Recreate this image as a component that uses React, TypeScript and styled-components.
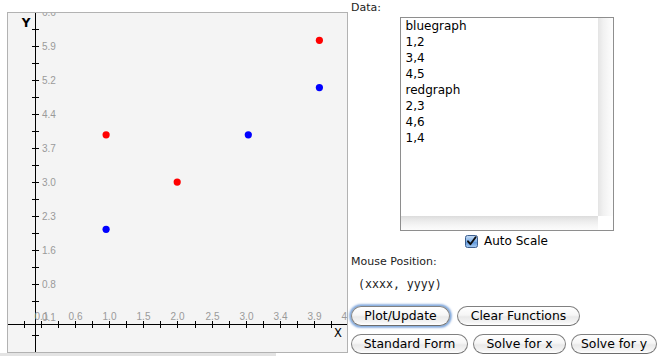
import React from "react";
import styled, { createGlobalStyle } from "styled-components";

const GlobalStyle = createGlobalStyle`
  html, body { margin: 0; padding: 0; background: #ffffff; }
  body { overflow: hidden; font-family: "DejaVu Sans", Verdana, sans-serif; }
`;

const Page = styled.div`
  display: flex;
  width: 665px;
  height: 356px;
  overflow: hidden;
  background: #ffffff;
`;

const LeftColumn = styled.div`
  width: 348px;
  display: flex;
  flex-direction: column;
  flex: none;
`;

const PlotPanel = styled.div`
  margin: 12px 0 0 7px;
  width: 341px;
  height: 341px;
  box-sizing: border-box;
  border: 1px solid #b2b2b2;
  background: #f4f4f4;
  overflow: hidden;
  flex: none;
`;

const BottomStrip = styled.div`
  width: 276px;
  height: 4px;
  background: #e3e3e3;
  flex: none;
`;

const RightColumn = styled.div`
  width: 317px;
  display: flex;
  flex-direction: column;
  flex: none;
`;

const FieldLabel = styled.div<{ $top?: number }>`
  margin-top: ${(p) => p.$top ?? 0}px;
  padding-left: 3px;
  height: 15px;
  line-height: 15px;
  font-size: 11px;
  color: #1c1c1c;
  font-family: "DejaVu Sans", sans-serif;
`;

const DataBox = styled.div`
  margin-top: 2px;
  align-self: center;
  width: 214px;
  height: 214px;
  box-sizing: border-box;
  border: 1px solid #8e8e8e;
  background: #ffffff;
  display: grid;
  grid-template-columns: 1fr 15px;
  grid-template-rows: 1fr 14px;
`;

const DataText = styled.div`
  padding-left: 5px;
  font-size: 12px;
  line-height: 16px;
  color: #000000;
  font-family: "DejaVu Sans", sans-serif;
  white-space: pre;
`;

const VTrack = styled.div`
  background: linear-gradient(to right, #e4e4e4 0%, #f1f1f1 35%, #f8f8f8 70%, #fdfdfd 100%);
`;

const HTrack = styled.div`
  background: linear-gradient(to bottom, #dcdcdc 0%, #ececec 35%, #f6f6f6 70%, #fcfcfc 100%);
`;

const Corner = styled.div`
  background: #ffffff;
`;

const CheckRow = styled.label`
  align-self: center;
  height: 19px;
  display: flex;
  align-items: center;
  gap: 6px;
  font-size: 12px;
  color: #000000;
  font-family: "DejaVu Sans", sans-serif;
`;

const CheckSvg = styled.svg`
  width: 13px;
  height: 13px;
  flex: none;
  margin-top: 1px;
`;

const MouseValue = styled.div`
  margin-top: 8px;
  padding-left: 3px;
  height: 15px;
  line-height: 15px;
  font-size: 11.6px;
  color: #1c1c1c;
  font-family: "DejaVu Sans Mono", "Liberation Mono", monospace;
  white-space: pre;
`;

const ButtonRow = styled.div<{ $top: number; $gap: number }>`
  margin-top: ${(p) => p.$top}px;
  padding-left: 3px;
  display: flex;
  gap: ${(p) => p.$gap}px;
`;

const AquaButton = styled.button<{ $w: number; $focused?: boolean }>`
  width: ${(p) => p.$w}px;
  height: 20px;
  box-sizing: border-box;
  padding: 0;
  border: 1px solid #808080;
  border-bottom-color: #6c6c6c;
  border-radius: 10px;
  background: linear-gradient(to bottom, #ffffff 0%, #f6f6f6 45%, #e9e9e9 55%, #f4f4f4 85%, #ffffff 100%);
  font-family: "DejaVu Sans", sans-serif;
  font-size: 12.4px;
  line-height: 18px;
  color: #000000;
  text-align: center;
  white-space: nowrap;
  box-shadow: ${(p) =>
    p.$focused
      ? "0 0 0 1px #8fb3e0, 0 0 2px 2px rgba(92, 142, 210, 0.65)"
      : "none"};
`;

const points = [
  { x: 1, y: 2, c: "#0000ff" },
  { x: 3, y: 4, c: "#0000ff" },
  { x: 4, y: 5, c: "#0000ff" },
  { x: 2, y: 3, c: "#ff0000" },
  { x: 4, y: 6, c: "#ff0000" },
  { x: 1, y: 4, c: "#ff0000" },
];

const OX = 8;
const OY = 13;

const yTicks = Array.from({ length: 18 }, (_, k) => 12 + 17 * k).concat([335]);
const yLabels: [number, string][] = [
  [12, "6.6"],
  [46, "5.9"],
  [80, "5.2"],
  [114, "4.4"],
  [148, "3.7"],
  [182, "3.0"],
  [216, "2.3"],
  [250, "1.6"],
  [284, "0.8"],
  [317, "0.1"],
];
const xTicks = Array.from({ length: 20 }, (_, k) => Math.round(24.4 + 17.01 * k));
const xLabelText: Record<number, string> = {
  1: "0.1",
  3: "0.6",
  5: "1.0",
  7: "1.5",
  9: "2.0",
  11: "2.5",
  13: "3.0",
  15: "3.4",
  17: "3.9",
  19: "4.3",
};

function Plot() {
  const axisX = 35 - OX + 0.5;
  const axisY = 324 - OY + 0.5;
  return (
    <svg width={339} height={339} viewBox="0 0 339 339" style={{ display: "block" }}>
      <g stroke="#000" strokeWidth={1} shapeRendering="crispEdges">
        <line x1={axisX} y1={0} x2={axisX} y2={339} />
        <line x1={0} y1={axisY} x2={339} y2={axisY} />
        {yTicks.map((t) => (
          <line key={"yt" + t} x1={32 - OX} y1={t - OY + 0.5} x2={39 - OX} y2={t - OY + 0.5} />
        ))}
        {xTicks.map((t) => (
          <line key={"xt" + t} x1={t - OX + 0.5} y1={321 - OY} x2={t - OX + 0.5} y2={328 - OY} />
        ))}
      </g>
      <g fill="#9a9a9a" fontFamily="'Liberation Sans', Arial, sans-serif" fontSize={10}>
        {yLabels.map(([t, s]) => (
          <text key={"yl" + t} x={42 - OX} y={t - OY + 3.6}>
            {s}
          </text>
        ))}
        {xTicks.map((t, k) =>
          xLabelText[k] ? (
            <text key={"xl" + k} x={t - OX + 0.5} y={320 - OY} textAnchor="middle">
              {xLabelText[k]}
            </text>
          ) : null
        )}
      </g>
      <text x={26 - OX} y={27 - OY} textAnchor="middle" fontFamily="'DejaVu Sans', sans-serif" fontSize={12} fontWeight="bold" fill="#000">
        Y
      </text>
      <text x={338 - OX} y={337 - OY} textAnchor="middle" fontFamily="'DejaVu Sans', sans-serif" fontSize={11.5} fill="#000">
        X
      </text>
      {points.map((p, i) => (
        <circle key={i} cx={35 - OX + 71.1 * p.x} cy={323.8 - OY - 47.25 * p.y} r={3.6} fill={p.c} />
      ))}
    </svg>
  );
}

function CheckIcon() {
  return (
    <CheckSvg viewBox="0 0 13 13">
      <defs>
        <linearGradient id="cbg" x1="0" y1="0" x2="0" y2="1">
          <stop offset="0" stopColor="#c9def5" />
          <stop offset="0.5" stopColor="#7eaee6" />
          <stop offset="0.55" stopColor="#5e96db" />
          <stop offset="1" stopColor="#a9cdf3" />
        </linearGradient>
      </defs>
      <rect x="0.5" y="0.5" width="12" height="12" rx="2" fill="url(#cbg)" stroke="#3d5f8f" />
      <path d="M3 6.3 L5.4 9.2 L10.6 2.2" fill="none" stroke="#0c0c0c" strokeWidth="1.9" strokeLinecap="round" strokeLinejoin="round" />
    </CheckSvg>
  );
}

const dataLines = ["bluegraph", "1,2", "3,4", "4,5", "redgraph", "2,3", "4,6", "1,4"];

export default function App() {
  return (
    <>
      <GlobalStyle />
      <Page>
        <LeftColumn>
          <PlotPanel>
            <Plot />
          </PlotPanel>
          <BottomStrip />
        </LeftColumn>
        <RightColumn>
          <FieldLabel>Data:</FieldLabel>
          <DataBox>
            <DataText>{dataLines.join("\n")}</DataText>
            <VTrack />
            <HTrack />
            <Corner />
          </DataBox>
          <CheckRow>
            <CheckIcon />
            <span>Auto Scale</span>
          </CheckRow>
          <FieldLabel $top={4}>Mouse Position:</FieldLabel>
          <MouseValue>{" (xxxx, yyyy)"}</MouseValue>
          <ButtonRow $top={14} $gap={7}>
            <AquaButton $w={99} $focused>
              Plot/Update
            </AquaButton>
            <AquaButton $w={123}>Clear Functions</AquaButton>
          </ButtonRow>
          <ButtonRow $top={8} $gap={5}>
            <AquaButton $w={117}>Standard Form</AquaButton>
            <AquaButton $w={93}>Solve for x</AquaButton>
            <AquaButton $w={86}>Solve for y</AquaButton>
          </ButtonRow>
        </RightColumn>
      </Page>
    </>
  );
}
